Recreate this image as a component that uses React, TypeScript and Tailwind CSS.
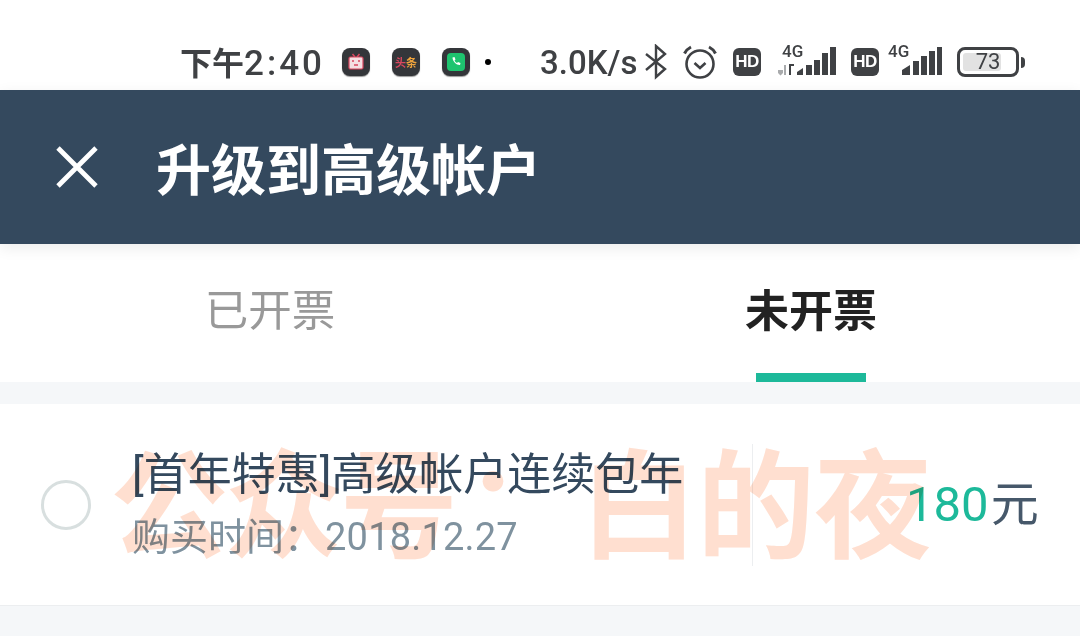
const CJK = "font-['Roboto','Noto_Sans_CJK_SC',sans-serif]";

function AppBadge({ children, className = "" }: { children: React.ReactNode; className?: string }) {
  return (
    <div className={`flex h-7 w-7 items-center justify-center rounded-lg bg-[#34363a] shadow-[0_1px_1px_#999] ${className}`}>
      {children}
    </div>
  );
}

function TvIcon() {
  return (
    <svg width="18" height="18" viewBox="0 0 18 18">
      <path d="M5.500 1 8 4M12.500 1 10 4" stroke="#d9475f" strokeWidth="1.500" />
      <rect x="2" y="4" width="14" height="12" rx="1.500" fill="#f5dfe2" stroke="#d9475f" strokeWidth="1.200" />
      <path d="M5 8h2M11 8h2M7 12h4" stroke="#d9475f" strokeWidth="1.300" />
    </svg>
  );
}

function PhoneIcon() {
  return (
    <div className="flex h-[18px] w-[18px] items-center justify-center rounded-[4px] bg-[#1ec46f]">
      <svg width="12" height="12" viewBox="0 0 12 12">
        <path d="M2.500 1.500 4.500 1l1 2.500-1 1c.5 1.200 1.300 2 2.500 2.500l1-1 2.500 1-.5 2C7 9.500 2.500 5.500 2.500 1.500Z" fill="#fff" />
      </svg>
    </div>
  );
}

function Bluetooth() {
  return (
    <svg width="24" height="36" viewBox="0 0 24 36" fill="none" stroke="#3f4144" strokeWidth="2.400">
      <path d="M2 10 21 25 12 33V2L21 10 2 26" />
    </svg>
  );
}

function Alarm() {
  return (
    <svg width="36" height="36" viewBox="0 0 36 36" fill="none" stroke="#3f4144">
      <circle cx="18" cy="20" r="13.500" strokeWidth="2.600" />
      <path d="M12.500 19l5.500 5 5.500-5" strokeWidth="2.600" />
      <path d="M2.500 9.500C4 6.500 6 4.500 9 3M33.500 9.500C32 6.500 30 4.500 27 3" strokeWidth="3" />
    </svg>
  );
}

function HdBadge({ className = "" }: { className?: string }) {
  return (
    <div className={`flex h-7 w-7 items-center justify-center rounded-md bg-[#3f4144] font-['Liberation_Sans',sans-serif] text-[17px] font-bold tracking-[-0.5px] text-white ${className}`}>
      HD
    </div>
  );
}

function SignalArrows() {
  return (
    <div className="relative ml-[17px] h-9 w-[58px]">
      <span className="absolute -top-px left-[4px] font-['Roboto',sans-serif] text-[17px] font-medium leading-[17px] text-[#3f4144]">4G</span>
      <svg width="58" height="36" viewBox="0 0 58 36" className="absolute left-0 top-0">
        <path d="M0 26h5v3l-2.500 2.500L0 29zM6 31V21h2v10z" fill="#a9abad" />
        <path d="M11 31V20h5v2h-3v9z" fill="#3f4144" />
        <path d="M19 31v-3l6-4v7zM28 31V21h6v10zM36 31V16h6v15zM44 31V9h6v22zM52 31V3h6v28z" fill="#3f4144" />
      </svg>
    </div>
  );
}

function Signal() {
  return (
    <div className="relative ml-[9px] h-9 w-[54px]">
      <span className="absolute -top-px left-0 font-['Roboto',sans-serif] text-[17px] font-medium leading-[17px] text-[#3f4144]">4G</span>
      <svg width="54" height="36" viewBox="0 0 54 36" className="absolute left-0 top-0">
        <path d="M14 31v-5l8-5v10zM25 31V17h6v14zM33 31V12h6v19zM41 31V7h6v24zM49 31V3h5v28z" fill="#3f4144" />
      </svg>
    </div>
  );
}

function Battery() {
  return (
    <div className="ml-[15px] flex items-center gap-[2px]">
      <div className="relative flex h-[30px] w-[62px] items-center justify-center rounded-[8px] border-[3px] border-[#3f4144]">
        <div className="absolute bottom-[3px] left-[3px] top-[3px] w-[38px] rounded-[3px] bg-[#e2e2e2]" />
        <span className="relative font-['Roboto',sans-serif] text-[22px] leading-none text-[#3f4144]">73</span>
      </div>
      <div className="h-[11px] w-1 rounded-r-sm bg-[#3f4144]" />
    </div>
  );
}

function StatusBar() {
  return (
    <div className="flex h-[90px] items-end bg-white pb-[10px] pl-[180px] text-[#3f4144]">
      <div className="flex h-9 items-center whitespace-nowrap">
        <span className="mt-[2px] w-[142px] font-['Roboto','Noto_Sans_CJK_SC',sans-serif] text-[32px] font-bold leading-none">
          下午<span className="text-[35px] font-medium tracking-[3px]">2:40</span>
        </span>
        <AppBadge className="ml-[20px]"><TvIcon /></AppBadge>
        <AppBadge className="ml-[22px]">
          <span className="font-['Noto_Sans_CJK_SC',sans-serif] text-[11px] font-bold leading-none">
            <span className="text-[#d9475f]">头</span><span className="text-[#eda23c]">条</span>
          </span>
        </AppBadge>
        <AppBadge className="ml-[22px]"><PhoneIcon /></AppBadge>
        <div className="ml-[15px] h-[6px] w-[6px] rounded-full bg-black" />
        <span className="ml-[49px] w-[97px] font-['Roboto',sans-serif] text-[33px] font-medium leading-none">3.0K/s</span>
        <div className="ml-[7px]"><Bluetooth /></div>
        <div className="ml-[14px]"><Alarm /></div>
        <HdBadge className="ml-[15px]" />
        <SignalArrows />
        <HdBadge className="ml-[15px]" />
        <Signal />
        <Battery />
      </div>
    </div>
  );
}

function Watermark() {
  return (
    <div className="pointer-events-none absolute left-[110px] top-[432px] z-20 flex whitespace-nowrap font-['Noto_Sans_CJK_SC',sans-serif] text-[118px] font-bold leading-[132px] text-[#ffdfd0] mix-blend-multiply">
      <span className="tracking-[-3px]">公众号</span>
      <span className="absolute left-[343px] top-[-22px] text-[80px]">·</span>
      <span className="ml-[125px] tracking-[-1px]">白的夜</span>
    </div>
  );
}

export default function App() {
  return (
    <div className={`relative h-[636px] w-[1080px] overflow-hidden bg-[#f5f7f9] ${CJK}`}>
      <StatusBar />
      <div className="relative z-10 flex h-[154px] items-center bg-[#34495e] shadow-[0_4px_14px_rgba(0,0,0,0.08)]">
        <svg width="42" height="42" viewBox="0 0 42 42" className="ml-[56px]" stroke="#fff" strokeWidth="4.800">
          <path d="M2 2 40 40M40 2 2 40" />
        </svg>
        <span className="ml-[58px] mt-[8px] text-[55px] font-bold leading-none text-white">升级到高级帐户</span>
      </div>
      <div className="grid h-[138px] grid-cols-2 bg-white">
        <div className="flex items-center justify-center pb-[2px]">
          <span className="text-[43.5px] leading-none text-[#999999]">已开票</span>
        </div>
        <div className="relative flex items-center justify-center pb-[2px]">
          <span className="ml-[2px] text-[44px] font-bold leading-none text-[#222222]">未开票</span>
          <div className="absolute bottom-0 left-[216px] h-[9px] w-[110px] bg-[#1db99a]" />
        </div>
      </div>
      <div className="mt-[22px] flex h-[202px] items-center border-b border-[#eceef0] bg-white">
        <div className="ml-[41px] h-[50px] w-[50px] rounded-full border-[3px] border-[#d8dfdf]" />
        <div className="ml-[41px] flex w-[620px] flex-col">
          <span className="-mt-[2px] text-[44px] leading-[54px] text-[#34495e]">[首年特惠]高级帐户连续包年</span>
          <span className="mt-[13px] text-[38px] leading-[44px] text-[#7f929f]">
            购买时间：<span className="ml-[3px] tracking-[0.2px]">2018.12.27</span>
          </span>
        </div>
        <div className="h-[122px] w-px bg-[#eceef0]" />
        <div className="ml-[153px] flex items-baseline whitespace-nowrap">
          <span className="text-[49px] text-[#1db99a]">180</span>
          <span className="ml-[2px] text-[48px] text-[#46586a]">元</span>
        </div>
      </div>
      <Watermark />
    </div>
  );
}
